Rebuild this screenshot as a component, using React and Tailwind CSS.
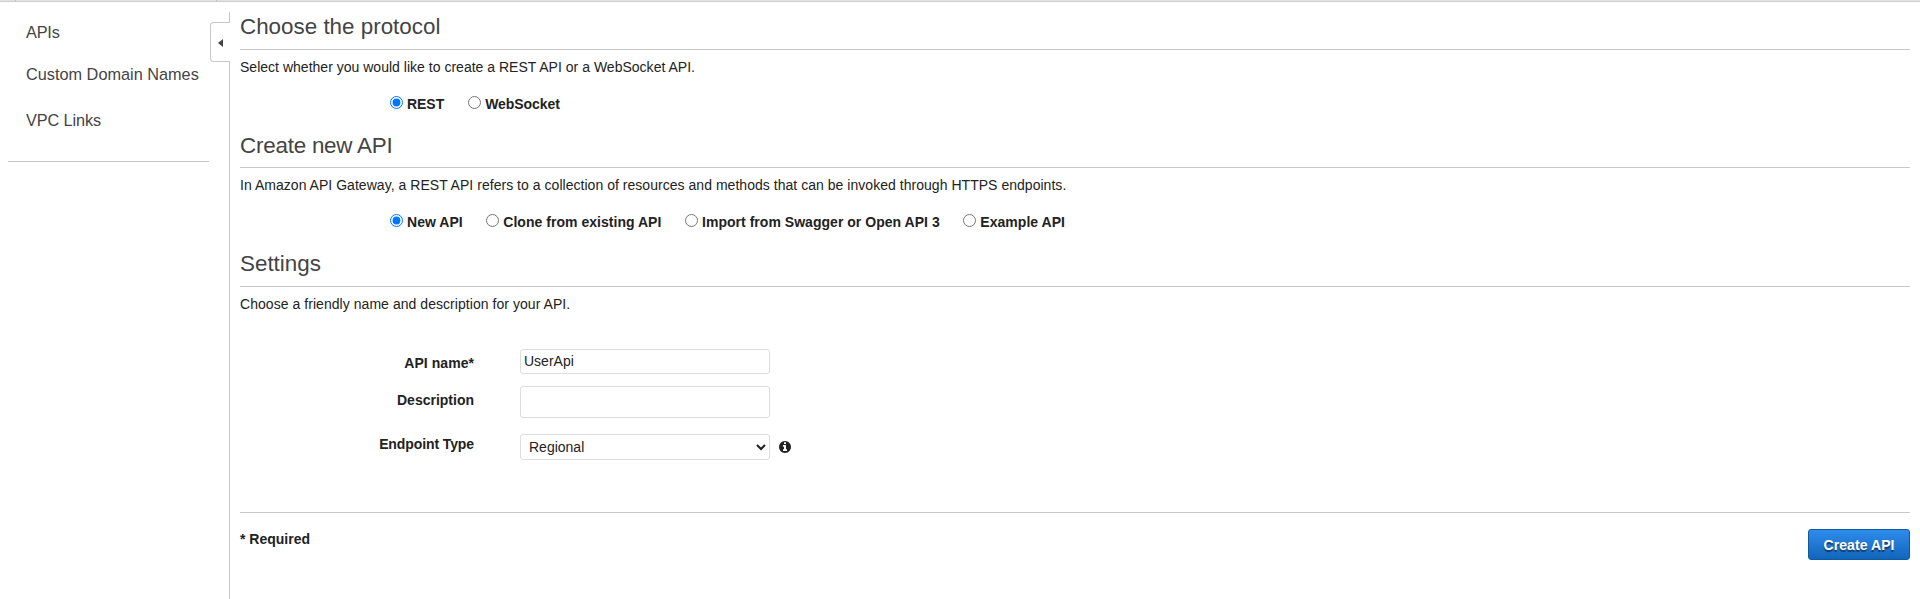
const NAV = [
  { label: "APIs", cls: "mt-[20px] tracking-[-0.2px]" },
  { label: "Custom Domain Names", cls: "mt-[22px]" },
  { label: "VPC Links", cls: "mt-[26px] tracking-[-0.1px]" },
];

function Sidebar() {
  return (
    <nav className="w-[210px] shrink-0 pl-2">
      <ul className="pl-[18px] text-[16.3px] leading-5 text-[#444]">
        {NAV.map((n) => (
          <li key={n.label} className={`${n.cls} whitespace-nowrap`}>{n.label}</li>
        ))}
      </ul>
      <hr className="mt-[31px] mr-px border-[#c8c8c8]" />
    </nav>
  );
}

function Divider() {
  return (
    <div className="flex w-5 shrink-0 flex-col pt-[10px]">
      <div className="h-[10px] border-r border-[#c8c8c8]" />
      <button className="flex h-10 items-center rounded-l-[4px] border border-r-0 border-[#c8c8c8] pt-[2px] pl-[7px]">
        <svg width="5" height="8" viewBox="0 0 5 8" fill="#444">
          <path d="M5 0v8L0 4z" />
        </svg>
      </button>
      <div className="flex-1 border-r border-[#c8c8c8]" />
    </div>
  );
}

function InfoIcon({ className }) {
  return (
    <svg className={className} viewBox="0 128 1536 1536" fill="currentColor">
      <path d="M1024 1376v-160q0-14-9-23t-23-9h-96v-512q0-14-9-23t-23-9h-320q-14 0-23 9t-9 23v160q0 14 9 23t23 9h96v320h-96q-14 0-23 9t-9 23v160q0 14 9 23t23 9h448q14 0 23-9t9-23zm-128-896v-160q0-14-9-23t-23-9h-192q-14 0-23 9t-9 23v160q0 14 9 23t23 9h192q14 0 23-9t9-23zm640 416q0 209-103 385.5t-279.5 279.5-385.5 103-385.5-103-279.5-279.5-103-385.5 103-385.5 279.5-279.5 385.5-103 385.5 103 279.5 279.5 103 385.5z" />
    </svg>
  );
}

function Section({ title, text, className, titleClass = "", textClass = "" }) {
  return (
    <header className={className}>
      <h2 className={`h-9 border-b border-[#c8c8c8] text-[22.4px] leading-[26px] text-[#444] ${titleClass}`}>{title}</h2>
      <p className={`mt-[7px] leading-5 ${textClass}`}>{text}</p>
    </header>
  );
}

function Radios({ name, options, className }) {
  return (
    <div className={`mt-[17px] flex h-5 pl-[150px] font-bold leading-5 ${className}`}>
      {options.map((o, i) => (
        <label key={o} className="flex whitespace-nowrap">
          <input type="radio" name={name} defaultChecked={i === 0} className="mt-[2px] mr-1 size-[13px]" />
          {o}
        </label>
      ))}
    </div>
  );
}

const LABEL = "w-[234px] shrink-0 text-right font-bold leading-5";
const FIELD = "ml-[46px] w-[250px] rounded-[3px] border border-[#ddd] bg-white outline-none";

export default function App() {
  return (
    <div className="flex h-[599px] flex-col overflow-hidden bg-white font-['Liberation_Sans',Arial,sans-serif] text-[14px] text-[#222]">
      <div className="flex h-[2px] shrink-0 border-b border-[#ccc] bg-[#e2e2e2]">
        <div className="w-4 border-r border-[#c4c4c4]" />
        <div className="w-[201px] border-r border-[#c4c4c4]" />
      </div>
      <div className="flex flex-1">
        <Sidebar />
        <Divider />
        <main className="flex-1 pr-[10px] pl-[10px]">
          <Section
            className="mt-3"
            title="Choose the protocol"
            text="Select whether you would like to create a REST API or a WebSocket API."
            textClass="tracking-[0.015px]"
          />
          <Radios name="protocol" options={["REST", "WebSocket"]} className="gap-6 tracking-[-0.05px]" />
          <Section
            className="mt-[18px]"
            title="Create new API"
            titleClass="pt-px tracking-[-0.22px]"
            text="In Amazon API Gateway, a REST API refers to a collection of resources and methods that can be invoked through HTTPS endpoints."
            textClass="tracking-[0.034px]"
          />
          <Radios
            name="source"
            options={["New API", "Clone from existing API", "Import from Swagger or Open API 3", "Example API"]}
            className="gap-[23.6px] tracking-[0.03px]"
          />
          <Section
            className="mt-[19px]"
            title="Settings"
            text="Choose a friendly name and description for your API."
            textClass="tracking-[0.05px]"
          />
          <form className="mt-[35px]">
            <div className="flex">
              <label className={`${LABEL} mt-1 tracking-[0.05px]`}>API name*</label>
              <input className={`${FIELD} h-[25px] pb-px pl-[3px]`} defaultValue="UserApi" />
            </div>
            <div className="mt-3 flex">
              <label className={`${LABEL} mt-1`}>Description</label>
              <textarea className={`${FIELD} h-8 resize-none`} />
            </div>
            <div className="mt-4 flex">
              <label className={`${LABEL} tracking-[-0.1px]`}>Endpoint Type</label>
              <div className="relative flex">
                <select className={`${FIELD} h-[26px] appearance-none pl-2`} defaultValue="Regional">
                  <option>Regional</option>
                </select>
                <svg className="pointer-events-none absolute top-[10px] right-1" width="10" height="7" viewBox="0 0 10 7" fill="none" stroke="#222" strokeWidth="2">
                  <path d="M1 1l4 4 4-4" />
                </svg>
              </div>
              <InfoIcon className="mt-[7px] ml-[9px] size-3" />
            </div>
          </form>
          <footer className="mt-[52px] flex justify-between border-t border-[#c8c8c8]">
            <p className="mt-4 font-bold leading-5">* Required</p>
            <button className="mt-4 h-[31px] w-[102px] rounded-[3px] border border-[#0f599e] bg-linear-to-b from-[#2e8cec] to-[#1166bb] pt-px font-bold tracking-[0.08px] whitespace-nowrap text-white [text-shadow:0_2px_1px_rgba(0,0,0,0.5)]">
              Create API
            </button>
          </footer>
        </main>
      </div>
    </div>
  );
}
